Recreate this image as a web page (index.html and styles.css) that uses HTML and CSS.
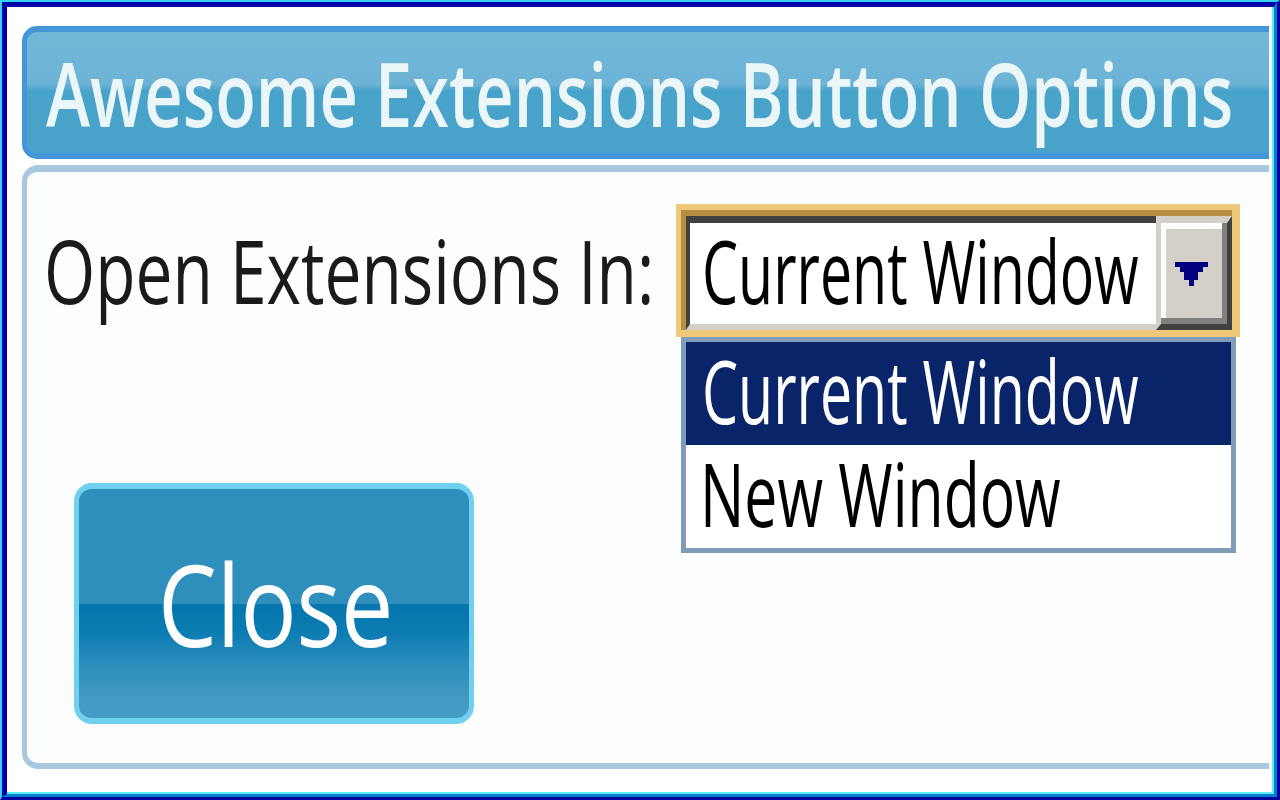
FILE: index.html
```html
<!DOCTYPE html>
<html lang="en">
<head>
<meta charset="utf-8">
<title>Awesome Extensions Button Options</title>
<link rel="stylesheet" href="styles.css">
</head>
<body>
<div class="window">
  <div class="frame">
    <div class="screen">
      <div class="clip">
        <header class="title-bar">
          <h1 class="title"><span class="fit fit-title">Awesome Extensions Button Options</span></h1>
        </header>
        <section class="panel">
          <div class="option-row">
            <label class="option-label"><span class="fit fit-label">Open Extensions In:</span></label>
            <div class="select-focus">
              <div class="select">
                <div class="select-field"><span class="fit fit-current">Current Window</span></div>
                <div class="select-btn">
                  <svg class="arrow" width="33" height="24" viewBox="0 0 33 24" shape-rendering="crispEdges">
                    <rect x="0" y="0" width="33" height="5" fill="#000080"/>
                    <rect x="5" y="5" width="23" height="5" fill="#000080"/>
                    <rect x="9" y="10" width="14" height="8" fill="#000080"/>
                    <rect x="14" y="18" width="5" height="6" fill="#000080"/>
                  </svg>
                </div>
              </div>
              <ul class="dropdown">
                <li class="item selected"><span class="fit fit-current">Current Window</span></li>
                <li class="item"><span class="fit fit-new">New Window</span></li>
              </ul>
            </div>
          </div>
          <button class="close-btn" type="button"><span class="fit fit-close">Close</span></button>
        </section>
      </div>
    </div>
  </div>
</div>
</body>
</html>
```
FILE: styles.css
```css
* { box-sizing: border-box; margin: 0; padding: 0; }
html, body { width: 1280px; height: 800px; overflow: hidden; background: #fff; }
body { font-family: "Open Sans", "Noto Sans", sans-serif; }

.window {
  width: 1280px; height: 800px;
  border-style: solid; border-width: 2px 3px 3px 2px;
  border-color: #34d4f0 #0000a0 #0000a0 #34d4f0;
}
.frame {
  height: 100%;
  border-style: solid; border-width: 5px 3px 3px 5px;
  border-color: #0000a8 #0080c8 #0080c8 #0000a8;
}
.screen {
  height: 100%;
  border-style: solid; border-width: 0 2px 2px 0; border-color: #5cecf8;
  background: #fff;
  padding: 19px 3px 23px 15px;
}
.clip {
  height: 100%;
  overflow: hidden;
  display: flex; flex-direction: column; gap: 6px;
}

/* glyphs in the reference are horizontally condensed */
.fit { display: inline-block; transform-origin: 0 0; white-space: nowrap; }
.fit-title { transform: scaleX(0.757); }
.fit-label { transform: scaleX(0.7567); }
.fit-current { transform: scaleX(0.6578); }
.fit-new { transform: scaleX(0.6767); margin-left: -2px; }
.fit-close { transform: scaleX(0.8263); }

.title-bar {
  flex: none;
  width: 1290px; height: 133px;
  border: 6px solid #4496d6; border-left-width: 5px;
  border-radius: 15px;
  background: linear-gradient(#72b8d9 0%, #6cb3d6 43%, #5aaad0 46%, #48a3cb 49%, #48a2ca 100%);
  padding: 17px 0 0 19px;
}
.title {
  font-size: 88px; line-height: 88px; font-weight: 600;
  color: #eaf6f8;
}

.panel {
  flex: 1;
  width: 1290px;
  border: 6px solid #a8c8e0; border-top-width: 7px; border-left-width: 5px;
  border-radius: 16px;
  background: #fcfefe;
  padding: 32px 0 0 17px;
}
.option-row { display: flex; align-items: flex-start; }
.option-label {
  flex: none; width: 632px;
  padding-top: 23px;
  font-size: 87px; line-height: 87px;
  color: #1a1a1a;
}

.select-focus {
  position: relative;
  flex: none;
  width: 564px; height: 133px;
  background: #f0c87a;
  padding: 6px 8px 7px 5px;
}
.select {
  height: 120px;
  display: flex;
  border-top: 6px solid #b88e42; border-left: 5px solid #b88e42;
}
.select-field {
  flex: 1; min-width: 0;
  border-top: 7px solid #404040; border-left: 4px solid #404040;
  border-bottom: 6px solid #d4d0c8;
  background: #fff;
  padding: 4px 0 0 12px;
  font-size: 87px; line-height: 87px; color: #000;
}
.select-btn {
  flex: none; width: 76px;
  border-style: solid; border-width: 7px 5px 6px 5px;
  border-color: #d4d0c8 #404040 #404040 #d4d0c8;
  background: #d4d0c8;
  box-shadow: inset -5px -6px 0 #808080, inset 5px 6px 0 #fff;
  display: flex; align-items: center; justify-content: center;
}
.arrow { display: block; margin-right: 5px; }

.dropdown {
  position: absolute; left: 5px; top: 133px;
  width: 555px; height: 216px;
  border: 5px solid #7f9db9;
  background: #fff;
  list-style: none;
}
.item {
  height: 103px;
  padding: 5px 0 0 16px;
  font-size: 87px; line-height: 87px; color: #000;
}
.item.selected { background: #0a246a; color: #fff; }

.close-btn {
  display: flex; align-items: flex-start; justify-content: flex-start;
  width: 400px; height: 241px;
  margin: 146px 0 0 30px;
  border: 6px solid #70d0f0; border-left-width: 5px; border-right-width: 5px;
  border-radius: 18px;
  background: linear-gradient(#2e8fbd 0%, #2e8fbd 50%, #0676ae 50.5%, #0b7cb2 62%, #2a8cbc 76%, #449bc4 92%, #459cc5 100%);
  color: #fff;
  font-family: inherit; font-size: 113px; line-height: 113px;
  padding: 58px 0 0 79px;
  overflow: hidden;
}
```
